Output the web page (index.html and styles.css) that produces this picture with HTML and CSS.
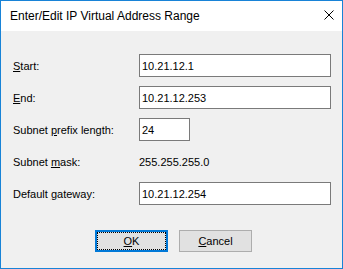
FILE: index.html
```html
<!DOCTYPE html>
<html lang="en">
<head>
    <meta charset="UTF-8">
    <meta name="viewport" content="width=device-width, initial-scale=1.0">
    <title>Enter/Edit IP Virtual Address Range</title>
    <link rel="stylesheet" href="styles.css">
</head>
<body>
    <section class="window">
        <div class="title_bar">
            <span class="title">Enter/Edit IP Virtual Address Range</span>
            <span class="close_btn">
                <svg width="10" height="10" viewBox="0 0 10 10">
                    <path d="M0.5 0.5 L9.5 9.5 M9.5 0.5 L0.5 9.5" stroke="#000" stroke-width="1" fill="none"/>
                </svg>
            </span>
        </div>
        <div class="content">
            <div class="form_grid">
                <label class="field_label"><u>S</u>tart:</label>
                <input class="field_input" type="text" value="10.21.12.1">

                <label class="field_label"><u>E</u>nd:</label>
                <input class="field_input" type="text" value="10.21.12.253">

                <label class="field_label">Subnet <u>p</u>refix length:</label>
                <input class="field_input short" type="text" value="24">

                <label class="field_label">Subnet <u>m</u>ask:</label>
                <span class="field_value">255.255.255.0</span>

                <label class="field_label">Default <u>g</u>ateway:</label>
                <input class="field_input" type="text" value="10.21.12.254">
            </div>
            <div class="button_row">
                <button class="btn default"><u>O</u>K</button>
                <button class="btn"><u>C</u>ancel</button>
            </div>
        </div>
    </section>
</body>
</html>
```

FILE: styles.css
```css
* {
    margin: 0;
    padding: 0;
    box-sizing: border-box;
}
body {
    width: 343px;
    height: 269px;
    overflow: hidden;
    font-family: "Liberation Sans", Arial, sans-serif;
    font-size: 11px;
    color: #000;
}
.window {
    width: 343px;
    height: 269px;
    border: 1px solid #1883d7;
    background: #f0f0f0;
    display: flex;
    flex-direction: column;
}
.title_bar {
    height: 30px;
    background: #fff;
    display: flex;
    align-items: center;
    justify-content: space-between;
    padding: 0 8px 0 9px;
}
.title {
    font-size: 12px;
    padding-bottom: 1px;
}
.close_btn {
    display: flex;
    width: 10px;
    height: 10px;
    margin-bottom: 2px;
}
.content {
    padding: 23px 11px 0 12px;
}
.form_grid {
    display: grid;
    grid-template-columns: 126px 192px;
    grid-auto-rows: 23px;
    row-gap: 9px;
    align-items: center;
}
.field_input {
    height: 23px;
    width: 100%;
    border: 1px solid #7a7a7a;
    background: #fff;
    font-family: inherit;
    font-size: 11px;
    color: #000;
    padding: 0 2px;
    outline: none;
}
.field_input.short {
    width: 51px;
}
.button_row {
    display: flex;
    gap: 11px;
    margin-top: 25px;
    padding-left: 82px;
}
.btn {
    width: 73px;
    height: 22px;
    background: #e1e1e1;
    border: 1px solid #adadad;
    font-family: inherit;
    font-size: 11px;
    color: #000;
}
.btn.default {
    border: 2px solid #0078d7;
    outline: 1px dotted #000;
    outline-offset: -3px;
}
```
